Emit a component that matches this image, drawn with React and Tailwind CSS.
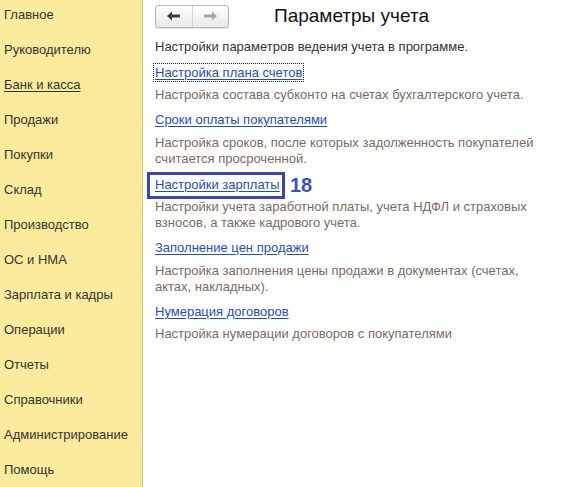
import React from 'react';

const menu = [
    "Главное", "Руководителю", "Банк и касса", "Продажи", "Покупки", "Склад",
    "Производство", "ОС и НМА", "Зарплата и кадры", "Операции", "Отчеты",
    "Справочники", "Администрирование", "Помощь",
];

function Sidebar() {
    return (
        <div className="w-[143px] shrink-0 bg-[#fbec9d] border-r border-[#d6c47e] pt-[7px] pl-[4px] flex flex-col gap-[19px]">
            {menu.map((item) => (
                <div key={item}
                    className={`h-[16px] leading-[16px] text-[13px] text-[#333] ${item === "Банк и касса" ? "underline underline-offset-2" : ""}`}>
                    {item}
                </div>
            ))}
        </div>
    );
}

function NavButtons() {
    return (
        <div className="flex w-[74px] h-[23px] border border-[#b8b8b8] rounded-[3px] bg-gradient-to-b from-white to-[#e9e9e9] shadow-[0_1px_1px_rgba(0,0,0,0.12)]">
            <div className="flex-1 flex items-center justify-center border-r border-[#d4d4d4]">
                <svg width="14" height="10" viewBox="0 0 14 10">
                    <path d="M0 5 L5 0.5 L5 3.5 L13 3.5 L13 6.5 L5 6.5 L5 9.5 Z" fill="#404040"/>
                </svg>
            </div>
            <div className="flex-1 flex items-center justify-center">
                <svg width="14" height="10" viewBox="0 0 14 10">
                    <path d="M14 5 L9 0.5 L9 3.5 L1 3.5 L1 6.5 L9 6.5 L9 9.5 Z" fill="#a8a8a8"/>
                </svg>
            </div>
        </div>
    );
}

function Link({children, focused}) {
    return (
        <span className={`text-[#1c4ec4] underline underline-offset-2 ${focused ? "outline outline-1 outline-dotted outline-[#222] outline-offset-[1px]" : ""}`}>
            {children}
        </span>
    );
}

function Desc({children, className = ""}) {
    return <p className={`text-[#786c60] ${className}`}>{children}</p>;
}

export default function App() {
    return (
        <div className="flex w-[576px] h-[487px] bg-white overflow-hidden text-[13px] leading-[16px]"
            style={{fontFamily: '"Liberation Sans", Arial, sans-serif'}}>
            <Sidebar/>
            <div className="pl-[12px] pt-[4px] flex-1">
                <div className="flex items-center">
                    <NavButtons/>
                    <h1 className="ml-[45px] text-[19px] leading-[24px] text-[#111]">Параметры учета</h1>
                </div>
                <p className="mt-[11px] text-[#333]">Настройки параметров ведения учета в программе.</p>
                <div className="mt-[10px]"><Link focused>Настройка плана счетов</Link></div>
                <Desc className="mt-[6px]">Настройка состава субконто на счетах бухгалтерского учета.</Desc>
                <div className="mt-[9px]"><Link>Сроки оплаты покупателями</Link></div>
                <Desc className="mt-[7px]">Настройка сроков, после которых задолженность покупателей<br/>считается просроченной.</Desc>
                <div className="mt-[10px] relative">
                    <Link>Настройки зарплаты</Link>
                    <div className="absolute left-[-8px] top-[-5px] w-[138px] h-[27px] border-[3px] border-[#3a44c2]"></div>
                    <span className="absolute left-[135px] top-[-3px] text-[20px] leading-[22px] font-bold text-[#3d4cc9]">18</span>
                </div>
                <Desc className="mt-[6px]">Настройки учета заработной платы, учета НДФЛ и страховых<br/>взносов, а также кадрового учета.</Desc>
                <div className="mt-[9px]"><Link>Заполнение цен продажи</Link></div>
                <Desc className="mt-[7px]">Настройка заполнения цены продажи в документах (счетах,<br/>актах, накладных).</Desc>
                <div className="mt-[9px]"><Link>Нумерация договоров</Link></div>
                <Desc className="mt-[6px]">Настройка нумерации договоров с покупателями</Desc>
            </div>
        </div>
    );
}
